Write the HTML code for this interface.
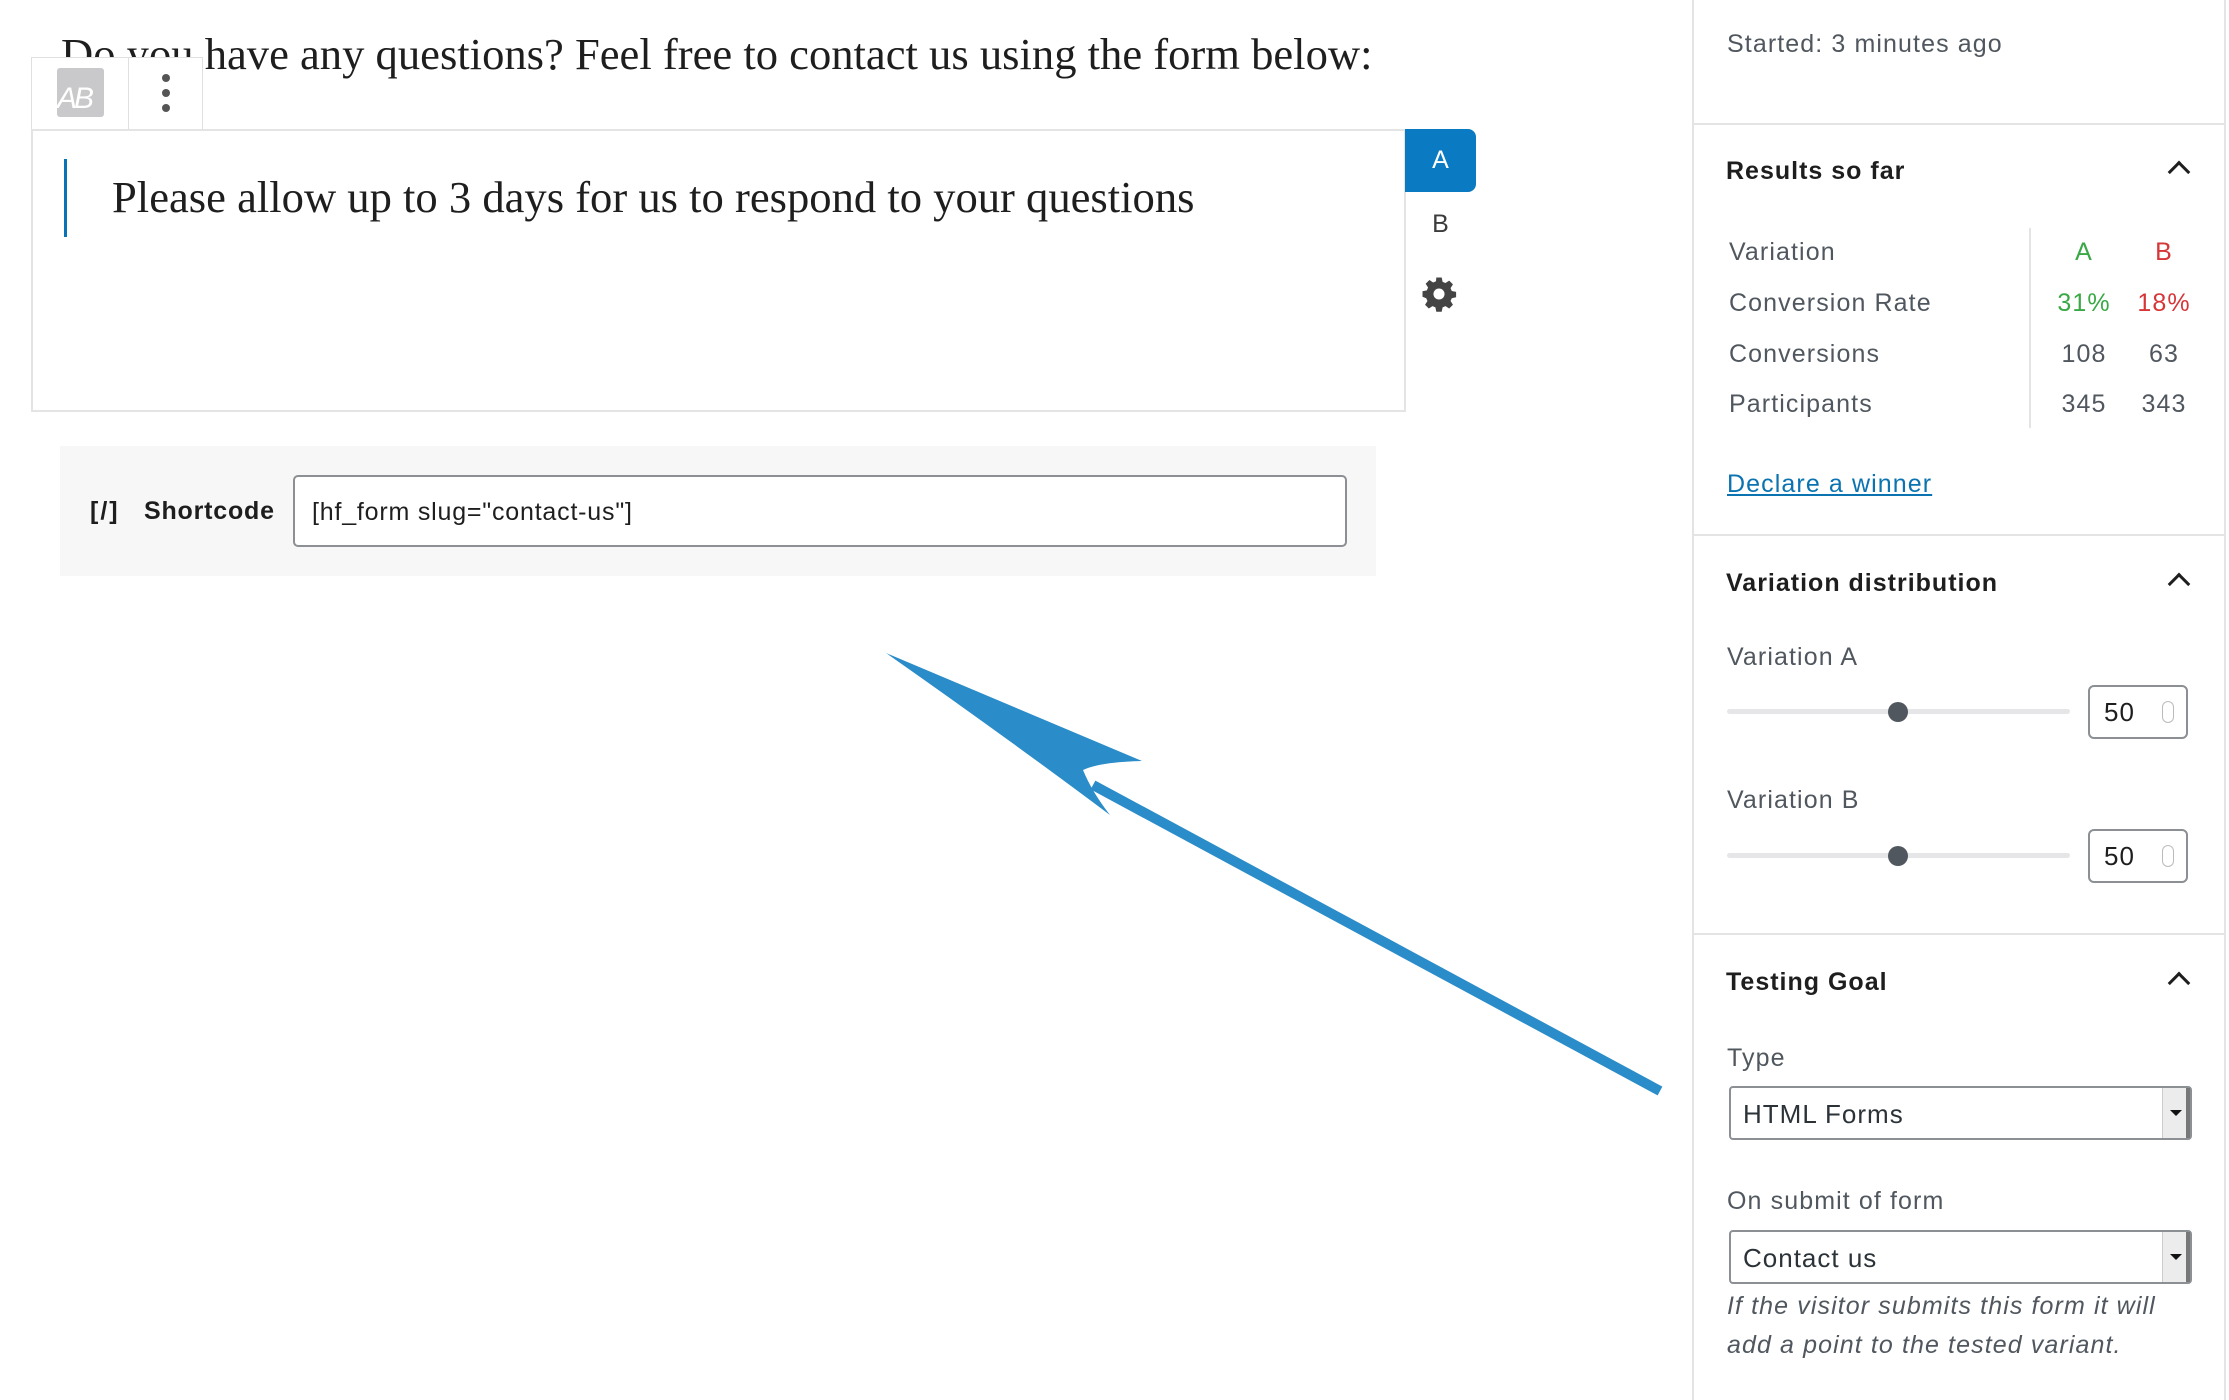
<!DOCTYPE html>
<html><head><meta charset="utf-8"><style>
*{margin:0;padding:0;box-sizing:border-box}
body{width:2229px;height:1400px;background:#fff;position:relative;overflow:hidden;font-family:"Liberation Sans",sans-serif;color:#1e1e1e}
.a{position:absolute;white-space:nowrap}
.serif{font-family:"Liberation Serif",serif}
.side{color:#50575e;font-size:25px;letter-spacing:1.1px}
.h{font-weight:bold;font-size:25px;color:#1e1e1e;letter-spacing:1px}
.sep{position:absolute;left:1693px;width:532px;height:2px;background:#e4e4e4}
.chev{position:absolute;width:16px;height:16px;border-left:3px solid #1e1e1e;border-top:3px solid #1e1e1e;transform:rotate(45deg)}
.num{position:absolute;left:2088px;width:100px;height:54px;border:2px solid #8c8f94;border-radius:6px;font-size:26px;padding:10px 0 0 14px;color:#1e1e1e;letter-spacing:1px}
.spin{position:absolute;right:12px;top:14px;width:12px;height:22px;border:1px solid #bbb;border-radius:6px}
.track{position:absolute;left:1727px;width:343px;height:5px;background:#e6e6e9;border-radius:3px}
.thumb{position:absolute;width:20px;height:20px;border-radius:50%;background:#50575e}
.sel{position:absolute;left:1729px;width:463px;height:54px;border:2px solid #8c8f94;border-radius:4px;font-size:26px;color:#2c3338;padding:11px 0 0 12px;letter-spacing:1px}
.sel .btn{position:absolute;right:0;top:0;width:28px;height:50px;background:#ececec;border-left:1px solid #ccc;border-right:4px solid #777}
.sel .btn:after{content:"";position:absolute;left:7px;top:22px;border-left:6px solid transparent;border-right:6px solid transparent;border-top:6px solid #111}
</style></head><body>

<div class="a serif" style="left:61px;top:28px;font-size:44.6px;color:#1e1e1e">Do you have any questions? Feel free to contact us using the form below:</div>
<div class="a" style="left:31px;top:57px;width:172px;height:73px;background:#fff;border:1px solid #e0e0e0;border-bottom:none"></div>
<div class="a" style="left:57px;top:68px;width:47px;height:49px;background:#c9c9cb;border-radius:3px;color:#fff;font-size:30px;font-style:italic;padding-top:14px;letter-spacing:-3px;overflow:hidden">AB</div>
<div class="a" style="left:128px;top:57px;width:1px;height:72px;background:#e0e0e0"></div>
<div class="a" style="left:162px;top:74px;width:8px;height:8px;border-radius:50%;background:#555"></div>
<div class="a" style="left:162px;top:89px;width:8px;height:8px;border-radius:50%;background:#555"></div>
<div class="a" style="left:162px;top:104px;width:8px;height:8px;border-radius:50%;background:#555"></div>

<div class="a" style="left:31px;top:129px;width:1375px;height:283px;border:2px solid #e4e4e4"></div>
<div class="a" style="left:64px;top:159px;width:3px;height:78px;background:#0a73b8"></div>
<div class="a serif" style="left:112px;top:171px;font-size:44.6px;color:#1e1e1e">Please allow up to 3 days for us to respond to your questions</div>

<div class="a" style="left:1405px;top:129px;width:71px;height:63px;background:#0a7bc2;border-radius:0 8px 8px 0;color:#fff;font-size:25px;text-align:center;padding-top:17px">A</div>
<div class="a" style="left:1405px;top:210px;width:71px;color:#3c3c3c;font-size:25px;text-align:center">B</div>
<svg class="a" style="left:1421px;top:276px" width="36" height="36" viewBox="0 0 24 24"><path fill="#444" d="M10.2 1h3.6l.6 2.9 1.9.8 2.5-1.6 2.5 2.5-1.6 2.5.8 1.9 2.9.6v3.6l-2.9.6-.8 1.9 1.6 2.5-2.5 2.5-2.5-1.6-1.9.8-.6 2.9h-3.6l-.6-2.9-1.9-.8-2.5 1.6-2.5-2.5 1.6-2.5-.8-1.9L1 13.8v-3.6l2.9-.6.8-1.9-1.6-2.5 2.5-2.5 2.5 1.6 1.9-.8zM12 8.3a3.7 3.7 0 1 0 0 7.4 3.7 3.7 0 0 0 0-7.4z"/></svg>

<div class="a" style="left:60px;top:446px;width:1316px;height:130px;background:#f7f7f7"></div>
<div class="a" style="left:90px;top:497px;font-size:25px;font-weight:bold;color:#1e1e1e;letter-spacing:2px">[/]</div>
<div class="a" style="left:144px;top:497px;font-size:25px;font-weight:bold;color:#1e1e1e;letter-spacing:0.8px">Shortcode</div>
<div class="a" style="left:293px;top:475px;width:1054px;height:72px;background:#fff;border:2px solid #8c8f94;border-radius:5px;font-size:25px;color:#1e1e1e;padding:21px 0 0 17px;letter-spacing:0.8px">[hf_form slug="contact-us"]</div>

<svg class="a" style="left:0;top:0" width="2229" height="1400">
<line x1="1093" y1="785" x2="1660" y2="1091" stroke="#2a8cc8" stroke-width="10"/>
<path fill="#2a8cc8" d="M886 653 L1142 761 Q1100 762 1083 770 Q1092 792 1110 815 Q1010 740 886 653 Z"/>
</svg>

<div class="a" style="left:1692px;top:0;width:2px;height:1400px;background:#e4e4e4"></div>
<div class="a" style="left:2224px;top:0;width:2px;height:1400px;background:#e4e4e4"></div>
<div class="a side" style="left:1727px;top:30px">Started: 3 minutes ago</div>
<div class="sep" style="top:123px"></div>

<div class="a h" style="left:1726px;top:157px">Results so far</div>
<div class="chev" style="left:2171px;top:164px"></div>
<div class="a side" style="left:1729px;top:238px">Variation</div>
<div class="a side" style="left:1729px;top:289px">Conversion Rate</div>
<div class="a side" style="left:1729px;top:340px">Conversions</div>
<div class="a side" style="left:1729px;top:390px">Participants</div>
<div class="a" style="left:2029px;top:228px;width:2px;height:200px;background:#e4e4e4"></div>
<div class="a side" style="left:2044px;width:80px;text-align:center;top:238px;color:#3aa845">A</div>
<div class="a side" style="left:2124px;width:80px;text-align:center;top:238px;color:#d63638">B</div>
<div class="a side" style="left:2044px;width:80px;text-align:center;top:289px;color:#3aa845">31%</div>
<div class="a side" style="left:2124px;width:80px;text-align:center;top:289px;color:#d63638">18%</div>
<div class="a side" style="left:2044px;width:80px;text-align:center;top:340px">108</div>
<div class="a side" style="left:2124px;width:80px;text-align:center;top:340px">63</div>
<div class="a side" style="left:2044px;width:80px;text-align:center;top:390px">345</div>
<div class="a side" style="left:2124px;width:80px;text-align:center;top:390px">343</div>
<div class="a side" style="left:1727px;top:470px;color:#0a73b0;text-decoration:underline">Declare a winner</div>
<div class="sep" style="top:534px"></div>

<div class="a h" style="left:1726px;top:569px">Variation distribution</div>
<div class="chev" style="left:2171px;top:576px"></div>
<div class="a side" style="left:1727px;top:643px">Variation A</div>
<div class="track" style="top:709px"></div>
<div class="thumb" style="left:1888px;top:702px"></div>
<div class="num" style="top:685px">50<div class="spin"></div></div>
<div class="a side" style="left:1727px;top:786px">Variation B</div>
<div class="track" style="top:853px"></div>
<div class="thumb" style="left:1888px;top:846px"></div>
<div class="num" style="top:829px">50<div class="spin"></div></div>
<div class="sep" style="top:933px"></div>

<div class="a h" style="left:1726px;top:968px">Testing Goal</div>
<div class="chev" style="left:2171px;top:975px"></div>
<div class="a side" style="left:1727px;top:1044px">Type</div>
<div class="sel" style="top:1086px">HTML Forms<div class="btn"></div></div>
<div class="a side" style="left:1727px;top:1187px">On submit of form</div>
<div class="sel" style="top:1230px">Contact us<div class="btn"></div></div>
<div class="a side" style="left:1727px;top:1292px;font-style:italic">If the visitor submits this form it will</div>
<div class="a side" style="left:1727px;top:1331px;font-style:italic">add a point to the tested variant.</div>
</body></html>
